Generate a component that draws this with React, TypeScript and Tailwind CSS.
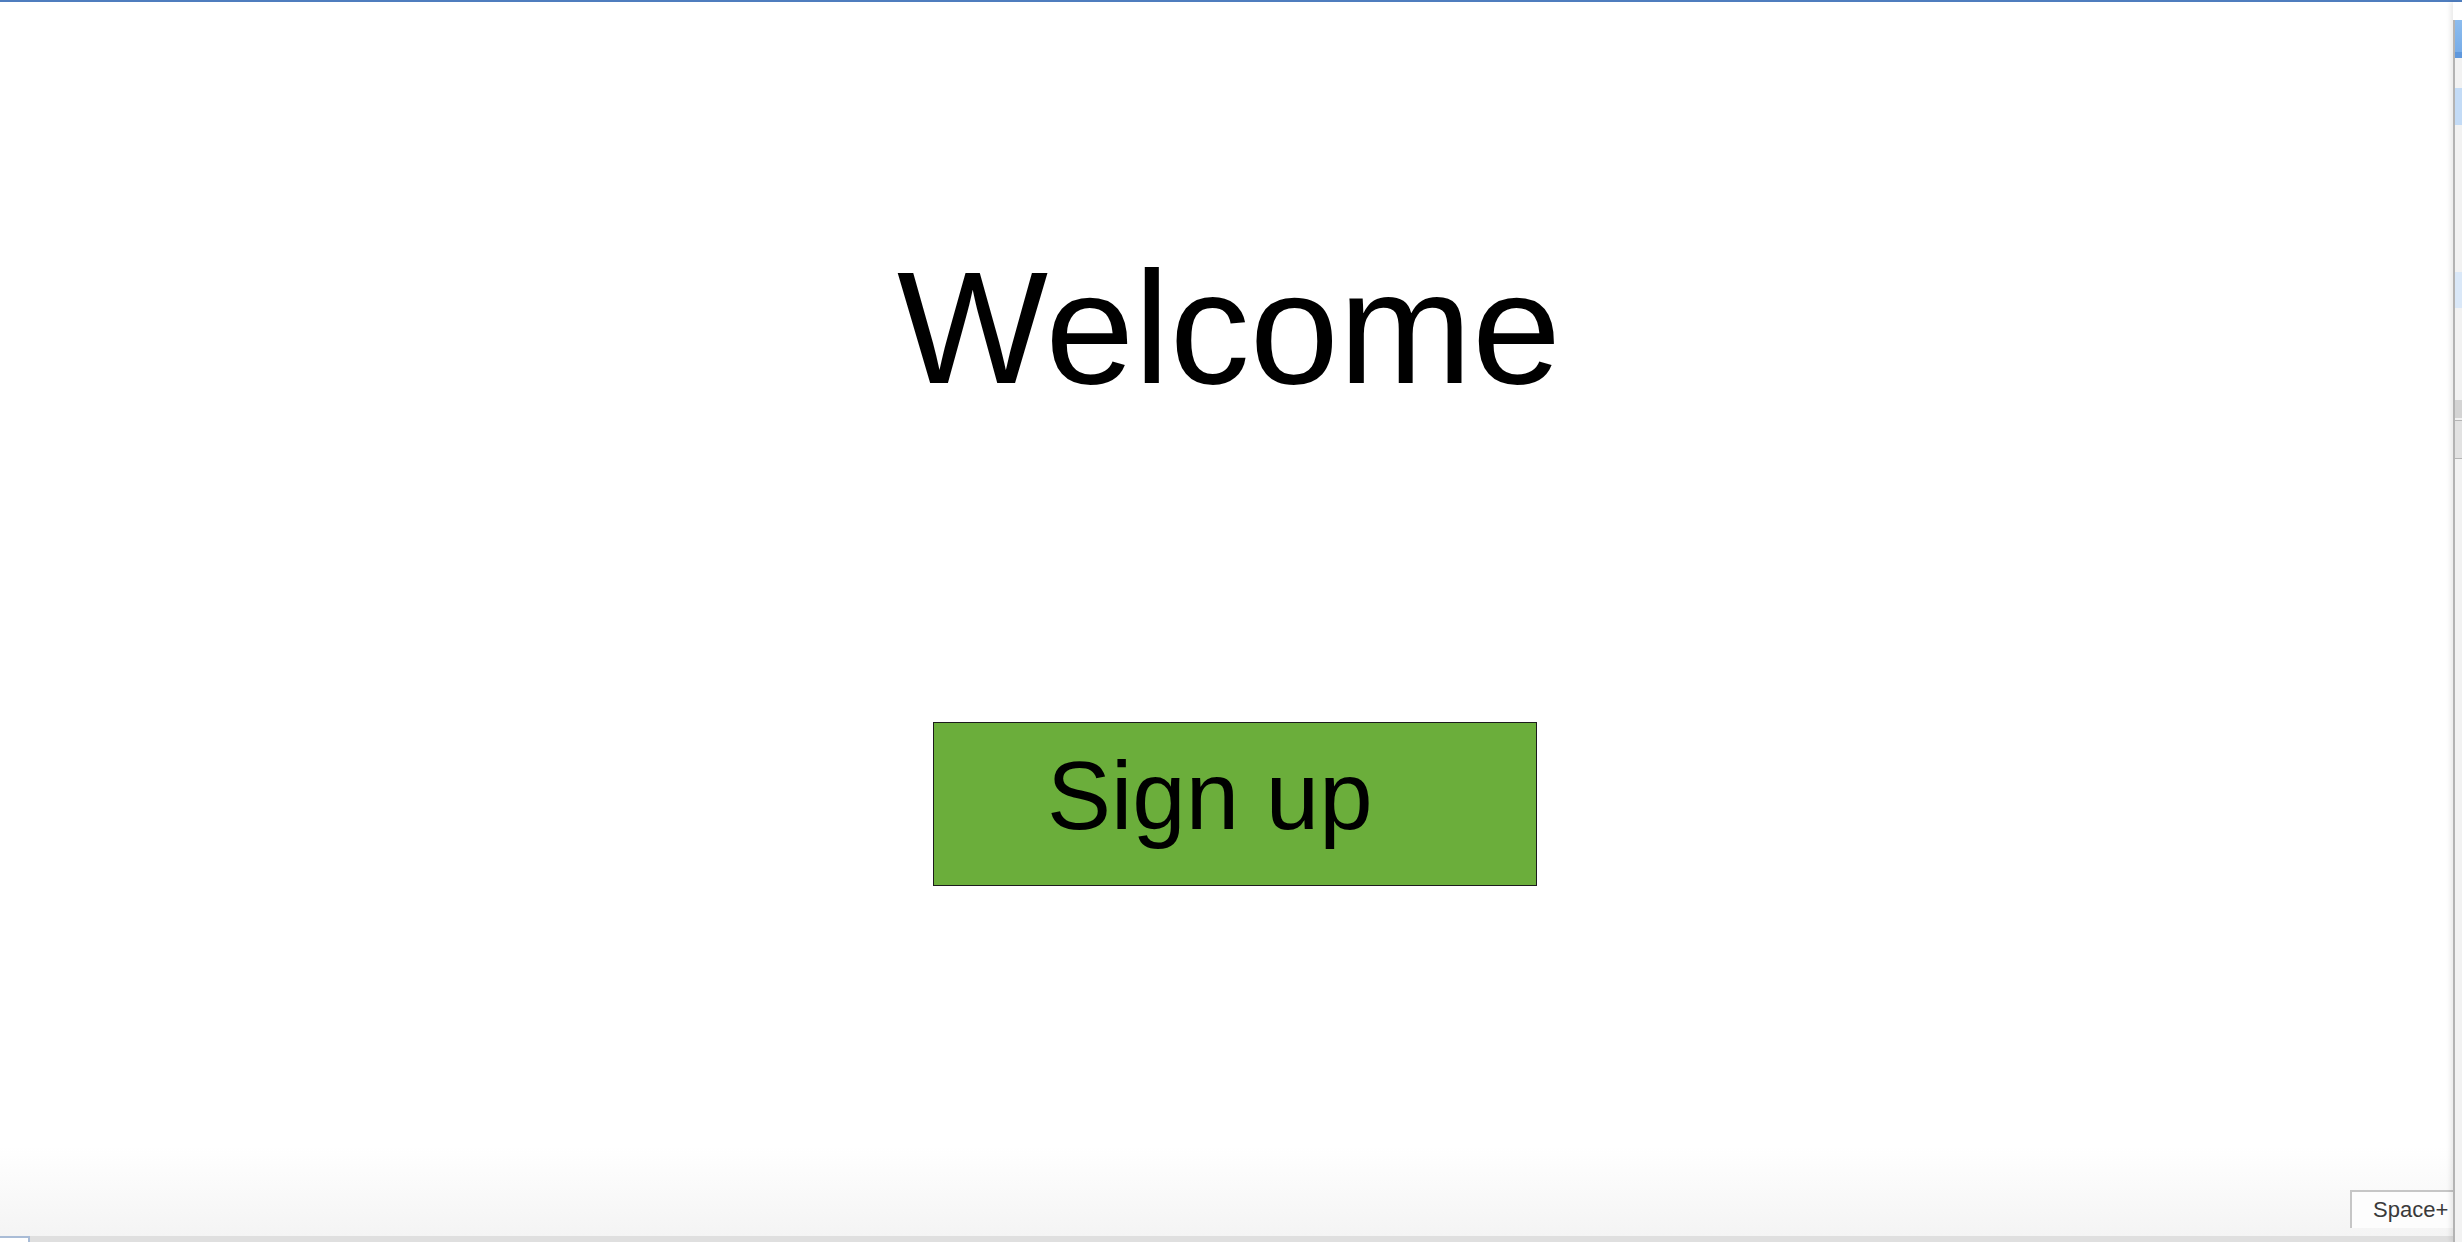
export default function App() {
  return (
    <div className="h-screen w-full flex flex-col bg-white overflow-hidden font-['Liberation_Sans',Arial,sans-serif]">
      {/* window top edge */}
      <div className="h-[2px] bg-[#4f7dbe]" />

      <div className="flex-1 flex min-h-0">
        <main className="flex-1 flex flex-col min-w-0">
          <div className="flex flex-col items-start">
            <h1 className="mt-[246px] ml-[897px] text-[160px] leading-none text-black whitespace-nowrap">
              Welcome
            </h1>
            <button className="mt-[314px] ml-[933px] w-[604px] h-[164px] border border-[#1c1c1c] bg-[#6bae3b] flex items-start pt-[25px] pl-[113px] cursor-pointer">
              <span className="block text-[96px] leading-none text-black whitespace-nowrap">
                Sign up
              </span>
            </button>
          </div>

          <div className="flex-1" />

          {/* footer strip */}
          <div className="h-[90px] flex items-end justify-end pb-[8px] bg-linear-to-b from-white to-[#f4f4f4]">
            <div className="h-[38px] w-[103px] border-t-2 border-l-2 border-[#c6c6c6] bg-[#fdfdfd] pl-[21px] flex items-center overflow-hidden">
              <span className="text-[22px] leading-none text-[#3a3a3a] whitespace-nowrap">Space+</span>
            </div>
          </div>
          <div className="h-[6px] bg-[#dfdfdf] flex">
            <div className="w-[30px] h-full bg-white border-t-2 border-r-2 border-[#a9bcd6]" />
          </div>
        </main>

        {/* cut-off side panel */}
        <aside className="w-[9px] pt-[18px] flex flex-col shadow-[-3px_0_4px_rgba(0,0,0,0.08)]">
          <div className="flex-1 flex flex-col border-l-2 border-[#b3b3b3] bg-[#f2f2f2]">
            <div className="h-[32px] bg-linear-to-b from-[#8cbcee] to-[#78ade8]" />
            <div className="h-[6px] bg-[#5f98dd]" />
            <div className="h-[30px]" />
            <div className="h-[37px] bg-[#c3dbf6]" />
            <div className="h-[147px]" />
            <div className="h-[36px] bg-[#dae8f8]" />
            <div className="h-[92px]" />
            <div className="h-[18px] bg-[#d4d4d4]" />
            <div className="h-[2px]" />
            <div className="h-[39px] bg-[#e2e2e2] border-y border-[#b5b5b5]" />
          </div>
        </aside>
      </div>
    </div>
  );
}
